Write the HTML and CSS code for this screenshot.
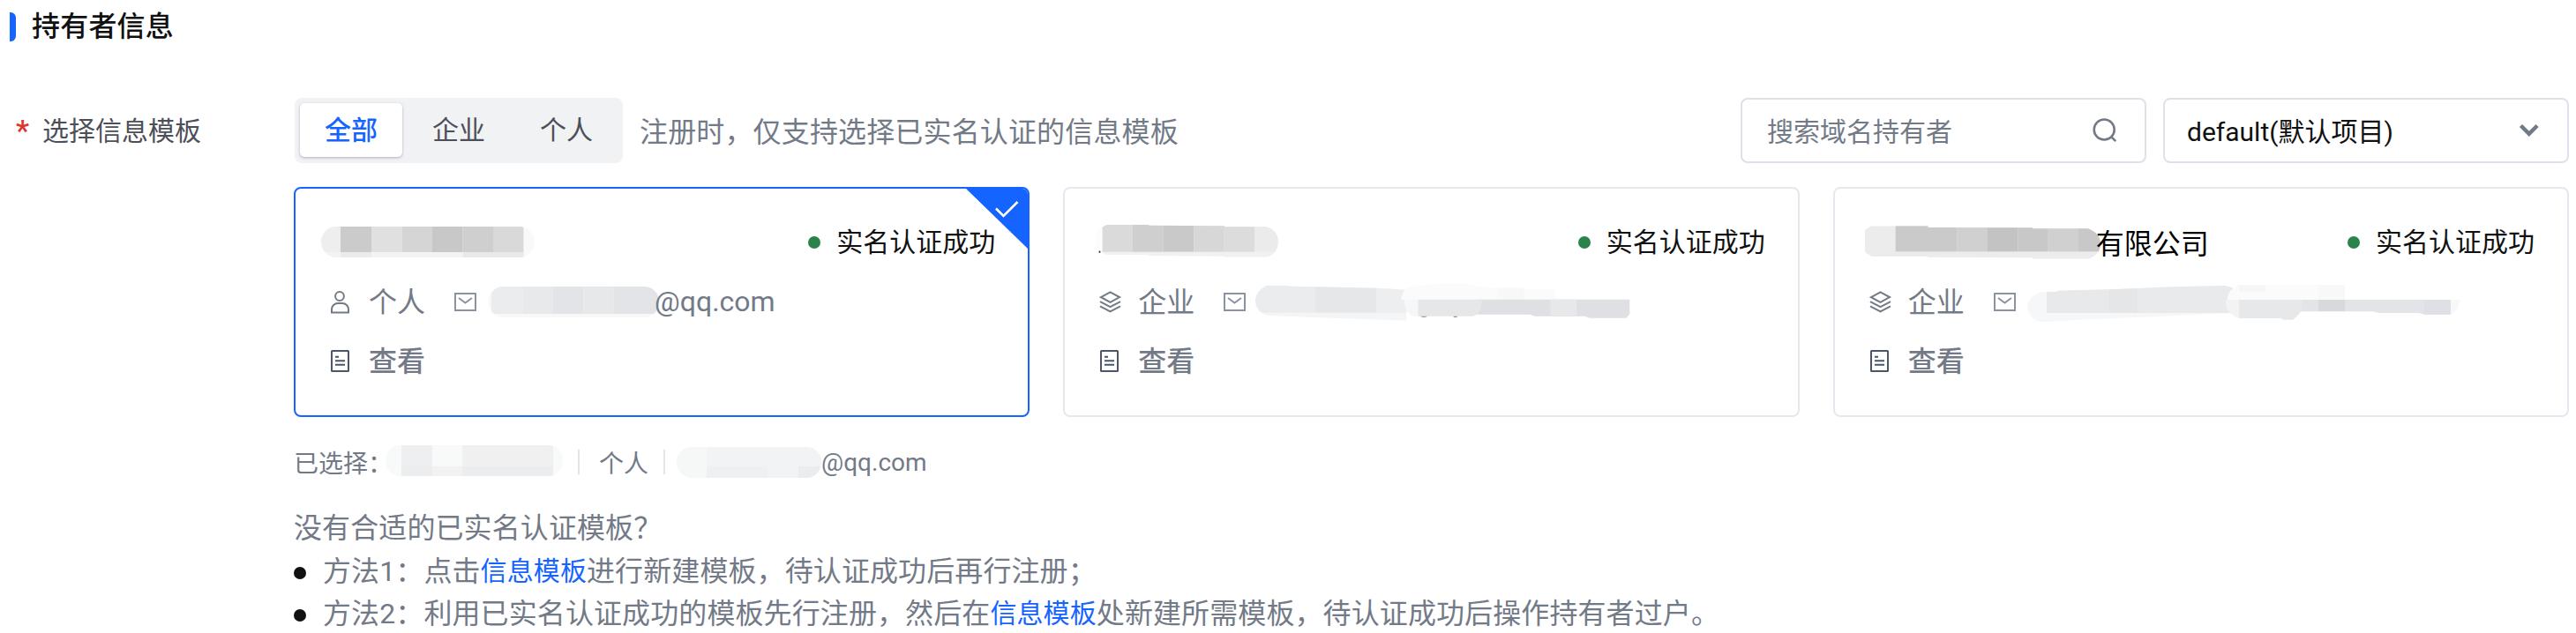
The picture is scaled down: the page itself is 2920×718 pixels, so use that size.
FILE: index.html
```html
<!DOCTYPE html>
<html lang="zh-CN">
<head>
    <meta charset="UTF-8">
    <meta name="viewport" content="width=device-width, initial-scale=1.0">
    <title>持有者信息</title>
    <link rel="stylesheet" href="styles.css">
</head>
<body>
    <svg class="defs" width="0" height="0">
        <symbol id="icon-user" viewBox="0 0 26 28">
            <circle cx="11" cy="7" r="4.9"/>
            <path d="M2 25.4V22a7 7 0 0 1 7-7h5a7 7 0 0 1 7 7v3.4z"/>
        </symbol>
        <symbol id="icon-layers" viewBox="0 0 26 28">
            <path d="M2 8.1L12.5 2.4 23 8.1 12.5 13.8z"/>
            <path d="M1 13.2l11.5 6 11.5-6M1 18.4l11.5 6 11.5-6"/>
        </symbol>
        <symbol id="icon-doc" viewBox="0 0 26 28">
            <rect x="2" y="2" width="19" height="23" rx="0.5"/>
            <path d="M6 8.7h4M6 13.2h11M6 17.7h11"/>
        </symbol>
        <symbol id="icon-mail" viewBox="0 0 26 22">
            <rect x="1" y="1" width="23" height="19"/>
            <path d="M5 6l7.4 5.6L20 6"/>
        </symbol>
    </svg>

    <h2 class="title">持有者信息</h2>

    <div class="form-row">
        <div class="label"><span class="required">*</span>选择信息模板</div>
        <div class="content">
            <div class="toolbar">
                <div class="tabs">
                    <div class="tab active">全部</div>
                    <div class="tab">企业</div>
                    <div class="tab">个人</div>
                </div>
                <div class="hint">注册时，仅支持选择已实名认证的信息模板</div>
                <div class="search">
                    <span>搜索域名持有者</span>
                    <svg width="28" height="28" viewBox="0 0 28 28"><circle cx="13.2" cy="13" r="11.5"/><path d="M21.2 21.2l5 5"/></svg>
                </div>
                <div class="select">
                    <span>default(默认项目)</span>
                    <svg width="24" height="16" viewBox="0 0 24 16"><path d="M2.5 2.5l9.3 9.3 9.3-9.3"/></svg>
                </div>
            </div>

            <div class="cards">
                <div class="card selected">
                    <svg class="corner" width="74" height="72" viewBox="0 0 74 72"><path class="corner-bg" d="M0 0h74v72z"/><path class="corner-check" d="M36 24.5l8.5 8.5 16-16"/></svg>
                    <div class="card-row">
                        <svg class="name-mask" width="242" height="35" viewBox="132 171 726 105">
                            <clipPath id="n1"><rect x="132" y="171" width="726" height="105" rx="52"/></clipPath>
                            <g clip-path="url(#n1)">
                                <rect x="132" y="171" width="66" height="87" fill="#eeeeee"/>
                                <rect x="198" y="171" width="105" height="87" fill="#cbcbcb"/>
                                <rect x="303" y="171" width="103" height="87" fill="#e0e0e0"/>
                                <rect x="406" y="171" width="104" height="87" fill="#d5d5d5"/>
                                <rect x="510" y="171" width="104" height="87" fill="#c8c8c8"/>
                                <rect x="614" y="171" width="103" height="87" fill="#cfcfcf"/>
                                <rect x="717" y="171" width="104" height="87" fill="#d9d9d9"/>
                                <rect x="821" y="171" width="37" height="105" fill="#f9f9f9"/>
                                <rect x="132" y="258" width="689" height="18" fill="#f3f3f3"/>
                                <rect x="198" y="258" width="105" height="18" fill="#ebebeb"/>
                                <rect x="614" y="258" width="207" height="18" fill="#e9e9e9"/>
                            </g>
                        </svg>
                        <div class="status">实名认证成功</div>
                    </div>
                    <div class="card-row info">
                        <svg class="icon"><use href="#icon-user"/></svg>
                        <span class="text">个人</span>
                        <svg class="icon-mail"><use href="#icon-mail"/></svg>
                        <svg class="mail-mask" width="193" height="35" viewBox="706 372 579 105">
                            <clipPath id="m1"><rect x="706" y="372" width="579" height="105" rx="50"/></clipPath>
                            <g clip-path="url(#m1)">
                                <rect x="706" y="372" width="579" height="105" fill="#f8f8f9"/>
                                <rect x="715" y="372" width="106" height="93" fill="#ebeced"/>
                                <rect x="821" y="372" width="103" height="93" fill="#e8e9eb"/>
                                <rect x="924" y="372" width="104" height="93" fill="#e3e4e8"/>
                                <rect x="1028" y="372" width="103" height="93" fill="#e7e8ea"/>
                                <rect x="1131" y="372" width="154" height="93" fill="#e3e4e8"/>
                            </g>
                        </svg>
                        <span class="mail">@qq.com</span>
                    </div>
                    <div class="card-row info">
                        <svg class="icon dark"><use href="#icon-doc"/></svg>
                        <span class="text view">查看</span>
                    </div>
                </div>

                <div class="card">
                    <div class="card-row">
                        <svg class="name-mask company" width="207" height="38" viewBox="157 163 621 114">
                            <clipPath id="n2"><path d="M157 215q3-35 38-50h140l5 3 256 2v3h135a45 50 0 0 1 0 103H595v-3l-260-2v-3H195q-38-10-38-53z"/></clipPath>
                            <g clip-path="url(#n2)">
                                <rect x="157" y="163" width="621" height="114" fill="#f1f1f1"/>
                                <rect x="157" y="163" width="23" height="114" fill="#fcfcfc"/>
                                <rect x="180" y="163" width="102" height="95" fill="#dadada"/>
                                <rect x="282" y="163" width="104" height="95" fill="#cfcfcf"/>
                                <rect x="386" y="163" width="105" height="95" fill="#c9c9c9"/>
                                <rect x="491" y="163" width="103" height="95" fill="#d7d7d7"/>
                                <rect x="594" y="163" width="103" height="95" fill="#dcdcdc"/>
                                <rect x="697" y="163" width="81" height="95" fill="#ebebeb"/>
                            </g>
                            <rect x="168" y="255" width="5" height="6" fill="#222"/>
                        </svg>
                        <div class="status">实名认证成功</div>
                    </div>
                    <div class="card-row info">
                        <svg class="icon"><use href="#icon-layers"/></svg>
                        <span class="text">企业</span>
                        <svg class="icon-mail"><use href="#icon-mail"/></svg>
                        <svg class="mail-mask company" width="426" height="44" viewBox="698 361 1278 132">
                            <clipPath id="m2"><path d="M700 423q5-35 40-51h70l5 3 300 6 100 6v105l-75-3-220-7-180-8q-35-10-40-51z"/></clipPath>
                            <g clip-path="url(#m2)">
                                <rect x="698" y="361" width="530" height="132" fill="#f4f5f6"/>
                                <rect x="698" y="361" width="206" height="104" fill="#ebecee"/>
                                <rect x="904" y="361" width="208" height="104" fill="#e6e7e9"/>
                                <rect x="1112" y="361" width="120" height="104" fill="#edeef0"/>
                            </g>
                            <path d="M1197 420q0-35 40-45l100-11h70l70 15 245 8v33z" fill="#fbfbfb"/>
                            <rect x="1524" y="380" width="90" height="40" fill="#f8f8f8"/>
                            <path d="M1208 420h46v57h-16q-30-12-30-57z" fill="#f6f7f8"/>
                            <path d="M1260 476h28q-14 9-28 0zM1375 476h12v4h-12z" fill="#777284"/>
                            <path d="M1455 420h519v50l-12 13h-125l-15-6H1650l-15-6H1455z" fill="#dfe0e4"/>
                            <rect x="1704" y="420" width="90" height="57" fill="#e7e8ea"/>
                            <path d="M1254 420h216v20q-2 30-30 37h-186z" fill="#e6e7e9"/>
                        </svg>
                    </div>
                    <div class="card-row info">
                        <svg class="icon dark"><use href="#icon-doc"/></svg>
                        <span class="text view">查看</span>
                    </div>
                </div>

                <div class="card">
                    <div class="card-row">
                        <svg class="name-mask limited" width="267" height="38" viewBox="158 170 801 114">
                            <clipPath id="n3"><path d="M158 185l22-14h193v5l355 1v3h188q42 15 43 52-1 38-43 51H728v-4l-355-2v-2H182l-24-14z"/></clipPath>
                            <g clip-path="url(#n3)">
                                <rect x="158" y="170" width="801" height="114" fill="#ececec"/>
                                <rect x="262" y="170" width="209" height="88" fill="#cacaca"/>
                                <rect x="471" y="170" width="102" height="88" fill="#d0d0d0"/>
                                <rect x="573" y="170" width="105" height="88" fill="#c3c3c3"/>
                                <rect x="678" y="170" width="103" height="88" fill="#c8c8c8"/>
                                <rect x="781" y="170" width="103" height="88" fill="#d0d0d0"/>
                                <rect x="884" y="170" width="75" height="88" fill="#c8c8c8"/>
                            </g>
                        </svg>
                        <span class="name">有限公司</span>
                        <div class="status">实名认证成功</div>
                    </div>
                    <div class="card-row info">
                        <svg class="icon"><use href="#icon-layers"/></svg>
                        <span class="text">企业</span>
                        <svg class="icon-mail"><use href="#icon-mail"/></svg>
                        <svg class="mail-mask limited" width="490" height="44" viewBox="714 366 1470 132">
                            <clipPath id="m3"><path d="M714 443q5-38 50-50h50l2-4 200-5 200-8 170-4q40 5 60 45-5 40-50 49l-260 12-260 11-110 7q-45-3-52-53z"/></clipPath>
                            <g clip-path="url(#m3)">
                                <rect x="714" y="366" width="740" height="132" fill="#f6f7f8"/>
                                <rect x="780" y="366" width="208" height="99" fill="#e8e9eb"/>
                                <rect x="988" y="366" width="103" height="99" fill="#e5e6e8"/>
                                <rect x="1091" y="366" width="330" height="99" fill="#e9eaec"/>
                            </g>
                            <path d="M1394 420q2-36 40-51h360v51z" fill="#fbfbfb"/>
                            <rect x="1434" y="370" width="90" height="22" fill="#f6f6f6"/>
                            <rect x="1704" y="370" width="90" height="50" fill="#f8f8f8"/>
                            <path d="M1434 420h-44q-6 45 44 63z" fill="#f3f3f3"/>
                            <path d="M1630 420h524v50h-90l-20-5h-135l-20-5h-259z" fill="#e3e4e7"/>
                            <rect x="1704" y="420" width="90" height="39" fill="#d8d9dd"/>
                            <rect x="2064" y="420" width="90" height="50" fill="#dfe0e5"/>
                            <path d="M2154 420h30q-2 38-30 50z" fill="#f7f9f9"/>
                            <path d="M1434 420h212q14 40-30 68h-30l-10-5h-142z" fill="#e7e8ea"/>
                        </svg>
                    </div>
                    <div class="card-row info">
                        <svg class="icon dark"><use href="#icon-doc"/></svg>
                        <span class="text view">查看</span>
                    </div>
                </div>
            </div>

            <div class="chosen">
                <span>已选择：</span>
                <svg class="chosen-name" width="201" height="35" viewBox="0 0 201 35">
                    <clipPath id="c1"><rect width="201" height="35" rx="17"/></clipPath>
                    <g clip-path="url(#c1)">
                        <rect width="201" height="35" fill="#f8f9f9"/>
                        <rect x="18" width="35" height="35" fill="#eeeff1"/>
                        <rect x="87" width="103" height="35" fill="#f0f0f1"/>
                        <rect x="18" y="24" width="172" height="11" fill="#ecedef"/>
                        <rect x="53" y="24" width="34" height="11" fill="#f2f2f3"/>
                    </g>
                </svg>
                <i class="divider"></i>
                <span>个人</span>
                <i class="divider second"></i>
                <svg class="chosen-mail" width="164" height="35" viewBox="0 0 164 35">
                    <clipPath id="c2"><rect width="164" height="35" rx="17"/></clipPath>
                    <g clip-path="url(#c2)">
                        <rect width="164" height="35" fill="#f6f7f7"/>
                        <rect x="34" width="130" height="35" fill="#f2f3f5"/>
                        <rect x="34" y="22" width="70" height="13" fill="#eff0f2"/>
                        <rect x="138" y="22" width="26" height="13" fill="#ebecef"/>
                    </g>
                </svg>
                <span>@qq.com</span>
            </div>

            <div class="tips">
                <p>没有合适的已实名认证模板？</p>
                <ul>
                    <li>方法1：点击<a>信息模板</a>进行新建模板，待认证成功后再行注册；</li>
                    <li>方法2：利用已实名认证成功的模板先行注册，然后在<a>信息模板</a>处新建所需模板，待认证成功后操作持有者过户。</li>
                </ul>
            </div>
        </div>
    </div>
</body>
</html>
```
FILE: styles.css
```css
* {
    box-sizing: border-box;
}

body {
    margin: 0;
    padding: 8px 8px 0 11px;
    font-family: Roboto, "Noto Sans CJK SC", sans-serif;
    font-size: 32px;
    color: #71757f;
    background-color: #fff;
}

svg {
    flex: none;
    fill: none;
    stroke-linecap: butt;
}

.defs {
    display: block;
    height: 0;
}

.title {
    display: flex;
    align-items: center;
    margin: 0;
    height: 44px;
    line-height: 44px;
    font-size: 32px;
    font-weight: 500;
    letter-spacing: 0.2px;
    color: #111;
}

.title::before {
    content: "";
    width: 7px;
    height: 33px;
    margin-right: 18px;
    background-color: #1664ff;
    border-radius: 0 6px 6px 0;
}

.form-row {
    display: flex;
    margin-top: 59px;
}

.label {
    display: flex;
    width: 322px;
    flex: none;
    padding-left: 7px;
    height: 74px;
    line-height: 75px;
    font-size: 30px;
    color: #4c4f58;
}

.required {
    width: 30px;
    font-size: 34px;
    font-weight: 500;
    color: #db372d;
}

.content {
    flex: 1;
}

.toolbar {
    display: flex;
    align-items: center;
    height: 74px;
}

.tabs {
    display: flex;
    gap: 6px;
    height: 74px;
    padding: 6px;
    margin-left: 1px;
    background-color: #f1f2f4;
    border-radius: 8px;
}

.tab {
    width: 116px;
    height: 61px;
    line-height: 62px;
    font-size: 30px;
    text-align: center;
    color: #4c4f58;
    border-radius: 5px;
}

.tab.active {
    background-color: #fff;
    color: #1664ff;
    font-weight: 500;
    box-shadow: 0 1px 3px rgba(50, 50, 90, 0.35);
}

.hint {
    margin-left: 19px;
    margin-right: auto;
    padding-bottom: 3px;
    letter-spacing: 0.15px;
    color: #737a87;
}

.search,
.select {
    display: flex;
    align-items: center;
    justify-content: space-between;
    width: 460px;
    height: 74px;
    padding: 0 31px 0 28px;
    font-size: 30px;
    border: 2px solid #dde2ea;
    border-radius: 8px;
}

.search svg,
.select svg {
    stroke: #737a87;
    stroke-width: 2.6;
}

.search span,
.select span {
    padding-bottom: 2px;
}

.search {
    color: #737a87;
    margin-right: 19px;
}

.select {
    color: #111;
    padding-left: 25px;
}

.select svg {
    stroke-width: 4.5;
    margin-bottom: 1px;
}

.cards {
    display: grid;
    grid-template-columns: repeat(3, 1fr);
    gap: 38px;
    margin-top: 27px;
}

.card {
    position: relative;
    height: 261px;
    padding: 27px 38px;
    border: 2px solid #e5e8ef;
    border-radius: 8px;
    overflow: hidden;
}

.card.selected {
    border-color: #1664ff;
}

.corner {
    position: absolute;
    top: -2px;
    right: -2px;
}

.corner-bg {
    fill: #1664ff;
}

.corner-check {
    stroke: #fff;
    stroke-width: 2.6;
}

.card-row {
    display: flex;
    align-items: center;
    height: 67px;
    white-space: nowrap;
}

.name-mask {
    margin-left: -9px;
}

.name-mask.company {
    margin-left: -3px;
    margin-bottom: 3px;
}

.name-mask.limited {
    margin-left: -4px;
    margin-top: 1px;
}

.name {
    margin-left: -5px;
    padding-bottom: 2px;
    color: #000;
}

.status {
    display: flex;
    align-items: center;
    margin-left: auto;
    margin-right: -1px;
    font-size: 30px;
    line-height: 34px;
    color: #111;
}

.status::before {
    content: "";
    width: 14px;
    height: 14px;
    margin-top: 1px;
    margin-right: 18px;
    border-radius: 50%;
    background-color: #2a834b;
}

.icon {
    width: 26px;
    height: 28px;
    margin-top: 2px;
    margin-right: 18px;
    margin-left: 1px;
    stroke: #737a87;
    stroke-width: 2;
}

.icon.dark {
    stroke: #4b5668;
}

.icon-mail {
    width: 26px;
    height: 22px;
    margin-top: 2px;
    margin-left: 33px;
    stroke: #8a93a1;
    stroke-width: 2;
}

.mail-mask {
    margin-left: 13px;
    margin-top: 1px;
}

.mail-mask.company {
    margin-left: 9px;
}

.mail-mask.limited {
    margin-left: 12px;
    margin-top: 5px;
}

.info {
    color: #737a87;
}

.text {
    padding-bottom: 3px;
}

.mail {
    margin-left: -5px;
    margin-top: 1px;
}

.view {
    font-weight: 500;
}

.chosen {
    display: flex;
    align-items: center;
    height: 44px;
    margin-top: 29px;
    font-size: 28px;
    color: #737a87;
}

.chosen-name {
    margin-left: -8px;
    margin-bottom: 3px;
}

.divider {
    width: 2px;
    height: 28px;
    margin: 0 22px 0 17px;
    background-color: #e3e5ea;
}

.divider.second {
    margin: 0 13px 0 17px;
}

.tips {
    margin-top: 29px;
    line-height: 48.5px;
    letter-spacing: 0.1px;
    color: #737a87;
}

.tips p {
    margin: 0;
}

.tips ul {
    margin: 0;
    padding: 0;
    list-style: none;
}

.tips li {
    display: flex;
    align-items: center;
}

.tips li::before {
    content: "";
    width: 14px;
    height: 14px;
    margin-top: 4px;
    margin-right: 19px;
    border-radius: 50%;
    background-color: #111;
}

.tips a {
    font-size: 30px;
    color: #1664ff;
}
```
